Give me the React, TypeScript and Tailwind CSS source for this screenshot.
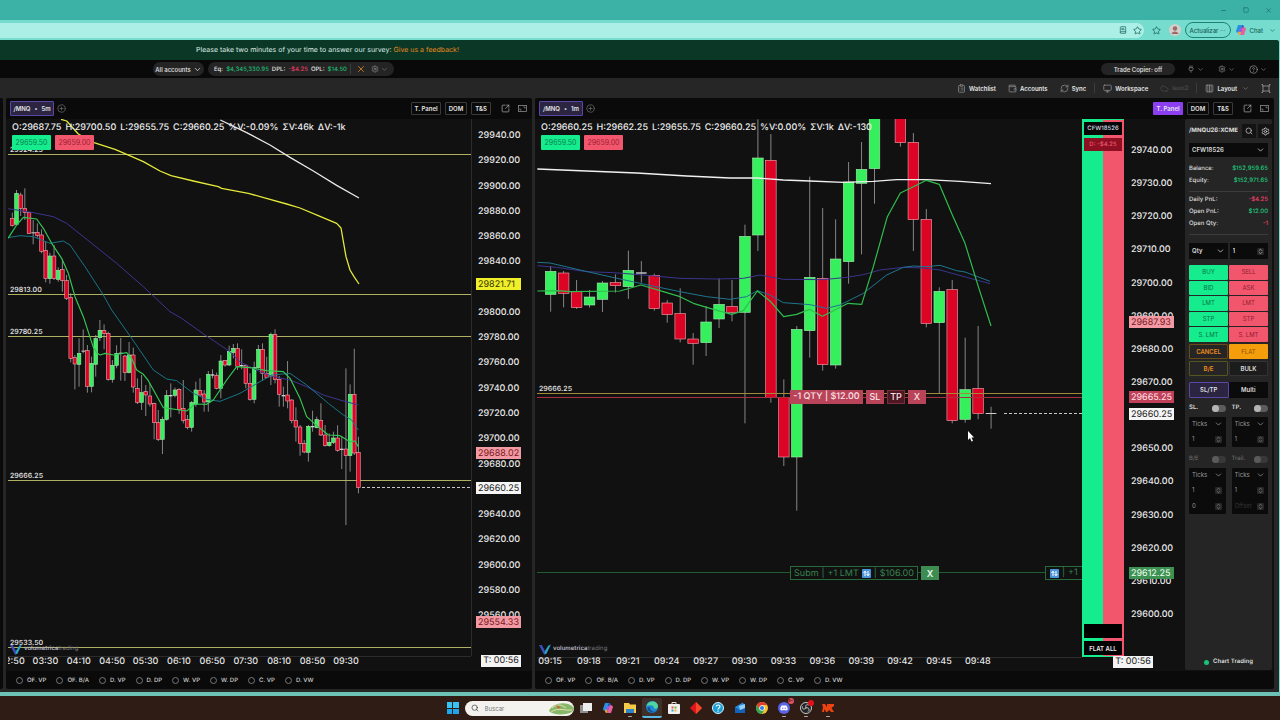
import { useState } from "react";
import type { ReactNode } from "react";
import {
  BookText, ChevronDown, ChevronsUpDown, CircleHelp, CirclePlus, ClipboardList, Columns4,
  Minus, Monitor, Plug, RefreshCw, Search, Settings, Square, SquareArrowOutUpRight,
  Star, Cloud, Wallet, X,
} from "lucide-react";
import { FaDiscord } from "react-icons/fa";

// x index, high, low, body top, body bottom, direction (1 up, -1 down, 0 flat)
type Candle = [number, number, number, number, number, number];

// candle and average coordinates are stored on a grid of 3 units per pixel
const UNIT = 3;

const candles5m: Candle[] = [
  [0, 308, 350, 325, 346, -1], [1, 240, 346, 250, 343, 1], [2, 248, 318, 255, 295, -1], [3, 235, 330, 295, 308, -1],
  [4, 305, 372, 308, 370, -1], [5, 330, 403, 367, 370, 0], [6, 340, 383, 367, 376, -1], [7, 358, 430, 375, 424, -1],
  [8, 395, 517, 421, 506, -1], [9, 428, 521, 438, 506, 1], [10, 405, 510, 438, 506, -1], [11, 472, 515, 481, 508, 1],
  [12, 448, 545, 478, 512, -1], [13, 495, 570, 512, 565, -1], [14, 550, 757, 562, 745, -1], [15, 735, 838, 743, 762, -1],
  [16, 685, 830, 730, 763, 1], [17, 658, 730, 722, 725, 0], [18, 705, 848, 722, 829, -1], [19, 740, 847, 760, 829, 1],
  [20, 675, 800, 686, 763, 1], [21, 630, 693, 661, 683, 1], [22, 643, 718, 661, 671, -1], [23, 665, 812, 670, 808, -1],
  [24, 750, 818, 766, 808, 1], [25, 706, 775, 730, 766, 1], [26, 684, 812, 728, 732, 0], [27, 735, 813, 738, 788, -1],
  [28, 696, 790, 735, 788, 1], [29, 713, 848, 735, 831, -1], [30, 805, 882, 835, 877, -1], [31, 795, 900, 848, 877, 1],
  [32, 825, 918, 845, 855, -1], [33, 820, 890, 858, 882, -1], [34, 878, 988, 881, 938, -1], [35, 900, 993, 938, 988, -1],
  [36, 920, 1032, 928, 988, 1], [37, 840, 932, 856, 928, 1], [38, 820, 922, 855, 859, 0], [39, 833, 862, 840, 856, 1],
  [40, 835, 912, 838, 898, -1], [41, 810, 940, 895, 931, -1], [42, 915, 958, 928, 952, -1], [43, 873, 965, 878, 952, 1],
  [44, 815, 890, 840, 882, 1], [45, 805, 858, 841, 855, -1], [46, 840, 905, 852, 876, -1], [47, 783, 905, 793, 876, 1],
  [48, 778, 805, 793, 797, 0], [49, 788, 838, 796, 835, -1], [50, 735, 865, 753, 835, 1], [51, 750, 770, 752, 765, -1],
  [52, 707, 768, 724, 765, 1], [53, 702, 745, 715, 728, 1], [54, 700, 780, 716, 770, -1], [55, 718, 778, 765, 769, 0],
  [56, 762, 835, 767, 820, -1], [57, 790, 872, 820, 868, -1], [58, 755, 880, 773, 868, 1], [59, 705, 776, 718, 773, 1],
  [60, 700, 812, 718, 790, -1], [61, 740, 805, 790, 803, -1], [62, 668, 825, 673, 798, 1], [63, 658, 820, 673, 808, -1],
  [64, 798, 890, 808, 853, -1], [65, 830, 890, 855, 859, 0], [66, 753, 895, 855, 873, -1], [67, 868, 940, 870, 932, -1],
  [68, 892, 995, 932, 951, -1], [69, 945, 1037, 951, 1000, -1], [70, 990, 1030, 1000, 1026, -1], [71, 945, 1055, 949, 1027, 1],
  [72, 902, 965, 948, 952, 0], [73, 920, 955, 929, 953, 1], [74, 880, 978, 931, 975, -1], [75, 945, 1010, 975, 1007, -1],
  [76, 970, 1010, 997, 1007, 1], [77, 965, 1002, 984, 997, 1], [78, 946, 1025, 984, 1021, -1], [79, 978, 1077, 1016, 1020, 0],
  [80, 775, 1245, 1017, 1037, -1], [81, 823, 1085, 853, 1037, 1], [82, 716, 1035, 853, 1029, -1], [83, 980, 1150, 1027, 1133, -1],
];

const candles1m: Candle[] = [
  [0, 498, 635, 514, 583, 1], [1, 513, 622, 519, 580, -1], [2, 540, 627, 574, 623, -1], [3, 570, 623, 591, 615, 1],
  [4, 543, 636, 549, 598, 1], [5, 523, 578, 548, 557, -1], [6, 452, 597, 511, 560, 1], [7, 483, 548, 517, 521, 0],
  [8, 521, 632, 526, 626, -1], [9, 600, 668, 609, 644, -1], [10, 565, 727, 641, 717, -1], [11, 699, 794, 717, 730, -1],
  [12, 618, 768, 666, 728, 1], [13, 535, 684, 613, 657, 1], [14, 540, 664, 619, 637, -1], [15, 374, 970, 409, 637, 1],
  [16, 58, 453, 174, 405, 1], [17, 102, 908, 181, 892, -1], [18, 838, 1098, 893, 1071, -1], [19, 678, 1232, 688, 1071, 1],
  [20, 230, 773, 532, 692, 1], [21, 324, 812, 535, 794, -1], [22, 358, 806, 477, 795, 1], [23, 186, 551, 246, 485, 1],
  [24, 126, 463, 208, 250, 1], [25, 40, 311, 40, 206, 1], [27, 40, 140, 40, 128, -1], [28, 99, 453, 127, 359, -1],
  [29, 327, 682, 358, 671, -1], [30, 562, 880, 574, 668, 1], [31, 540, 970, 569, 962, -1], [32, 713, 968, 869, 958, 1],
  [33, 678, 958, 865, 941, -1], [34, 920, 986, 939, 942, 0],
];

const averages5m = [
  { color: "#e4e93a", width: 1.3, points: "183,28 200,33 235,72 282,98 345,118 380,133 430,155 480,183 513,197 580,213 655,230 665,235 745,250 810,268 860,282 900,294 960,319 1010,340 1023,354 1038,440 1050,480 1062,500 1077,522" },
  { color: "#e8e8e8", width: 1.3, points: "661,30 740,68 810,105 870,142 940,183 1010,226 1077,264" },
  { color: "#3c3590", width: 1, points: "24,296 100,308 160,320 200,340 275,400 350,460 430,530 510,605 545,625 615,675 690,725 720,756 780,785 820,800 870,810 920,830 970,855 1020,870 1075,885" },
  { color: "#1b7486", width: 1, points: "24,383 60,377 100,380 150,400 190,393 210,405 255,470 310,555 335,600 395,685 460,780 500,807 530,812 580,850 620,868 660,874 720,850 780,815 815,795 870,790 920,825 985,880 1030,915 1055,930 1075,960" },
  { color: "#35c552", width: 1.2, points: "24,385 50,345 70,322 110,327 130,355 155,400 185,445 205,490 225,560 250,620 280,712 290,728 300,735 315,730 340,735 380,728 395,745 410,780 430,793 445,812 490,893 560,903 585,882 620,883 640,870 680,810 710,770 750,773 800,782 850,785 870,805 900,865 920,920 960,955 985,975 1020,977 1050,995 1065,993 1075,1010" },
];

const averages1m = [
  { color: "#f0f0f0", width: 1.3, points: "22,207 170,213 320,219 470,228 600,234 682,234 760,240 840,243 940,247 1030,244 1100,239 1190,239 1290,244 1383,251" },
  { color: "#3a348c", width: 1, points: "22,497 80,502 170,515 250,518 340,525 450,535 560,537 640,535 690,525 760,538 880,539 950,532 1000,524 1050,510 1120,502 1180,504 1230,510 1310,532 1380,551" },
  { color: "#1f7490", width: 1, points: "22,487 60,489 150,510 230,528 330,550 450,575 530,590 600,598 650,590 682,572 720,585 760,608 840,614 890,625 930,615 1000,580 1070,525 1120,502 1150,498 1190,500 1230,496 1280,512 1305,516 1380,544" },
  { color: "#2fbe4c", width: 1.2, points: "22,573 80,572 120,575 270,573 333,555 400,575 450,590 490,610 540,625 605,643 640,632 682,573 720,603 761,650 800,643 838,628 877,649 915,630 954,610 995,613 1030,500 1072,350 1111,279 1150,260 1189,241 1228,253 1267,345 1305,430 1345,560 1383,678" },
];

const levels5m = [
  { y: 35, label: "29924.25" },
  { y: 175, label: "29813.00" },
  { y: 217, label: "29780.25" },
  { y: 361, label: "29666.25" },
  { y: 528, label: "29533.50" },
];

const times5m = ["02:50", "03:30", "04:10", "04:50", "05:30", "06:10", "06:50", "07:30", "08:10", "08:50", "09:30"];
const times1m = ["09:15", "09:18", "09:21", "09:24", "09:27", "09:30", "09:33", "09:36", "09:39", "09:42", "09:45", "09:48"];
const indicators = ["OF. VP", "OF. B/A", "D. VP", "D. DP", "W. VP", "W. DP", "C. VP", "D. VW"];

function Candles({ data, first, step, width }: { data: Candle[]; first: number; step: number; width: number }) {
  return (
    <g>
      {data.map(([i, high, low, top, bottom, dir]) => {
        const x = (first + i * step) / UNIT;
        const fill = dir > 0 ? "#35f05c" : dir < 0 ? "#dc0424" : "#cfcfcf";
        return (
          <g key={i}>
            <line x1={x} x2={x} y1={high / UNIT} y2={low / UNIT} stroke="#a3a3a3" strokeWidth={0.8} />
            <rect
              x={x - width / 2}
              y={top / UNIT}
              width={width}
              height={Math.max((bottom - top) / UNIT, 1)}
              fill={fill}
              stroke={dir > 0 ? "#a9e8b2" : dir < 0 ? "#f0a9b1" : "none"}
              strokeWidth={0.6}
            />
          </g>
        );
      })}
    </g>
  );
}

function Averages({ lines }: { lines: typeof averages5m }) {
  return (
    <g transform={`scale(${1 / UNIT})`} fill="none" strokeLinejoin="round">
      {lines.map((l) => (
        <polyline key={l.color} points={l.points} stroke={l.color} strokeWidth={l.width * UNIT} />
      ))}
    </g>
  );
}

function TimeLabels({ times, first, step }: { times: string[]; first: number; step: number }) {
  return (
    <g className="fill-[#e4e4e4] text-[9px] font-medium" textAnchor="middle">
      {times.map((t, i) => (
        <text key={t} x={first + i * step} y={545}>{t}</text>
      ))}
    </g>
  );
}

type Mark = { y: number; text: string; box: string; ink: string };

function PriceAxis({ top, step, from, by, count, marks }: { top: number; step: number; from: number; by: number; count: number; marks: Mark[] }) {
  return (
    <svg className="h-[552px] w-full text-[9px]">
      <g className="fill-[#e9e9e9] font-medium">
        {Array.from({ length: count }, (_, i) => (
          <text key={i} x={7} y={top + i * step + 4}>{(from - i * by).toFixed(2)}</text>
        ))}
      </g>
      {marks.map((m) => (
        <g key={m.text}>
          <rect x={5} y={m.y - 6} width={45} height={12} fill={m.box} />
          <text x={7} y={m.y + 3} fill={m.ink}>{m.text}</text>
        </g>
      ))}
    </svg>
  );
}

function Brand() {
  return (
    <div className="absolute top-[524px] left-0.5 flex items-center gap-0.5 text-[6px] leading-3 text-[#b9b9c6]">
      <svg width="12" height="11" viewBox="0 0 13 12">
        <path d="M0 1 3 1 6.500 7.500 6.500 11.500 5 11Z" fill="#3b4fb8" />
        <path d="M13 0.500 10 2 6.500 7.500 6 11.500 8 10.500Z" fill="#2aa3c4" />
      </svg>
      <span><b className="font-semibold">volumetrica</b><span className="text-[#77777f]">trading</span></span>
    </div>
  );
}

function Quotes({ text }: { text: string[] }) {
  return (
    <div className="absolute top-[3px] left-1">
      <div className="flex gap-1 text-[9px] leading-3 font-medium whitespace-nowrap text-[#ededed]">
        {text.map((t) => <span key={t}>{t}</span>)}
      </div>
      <div className="mt-px flex gap-1 text-[7px] leading-[15px]">
        <button className="w-[39px] rounded-[1px] bg-[#14ec8d] text-[#0b8050]">29659.50</button>
        <button className="w-[39px] rounded-[1px] bg-[#f2566c] text-[#9c1f33]">29659.00</button>
      </div>
    </div>
  );
}

function SwapIcon() {
  return (
    <svg width="9" height="9" viewBox="0 0 9 9">
      <rect width="9" height="9" rx="1" fill="#4b94dc" />
      <path d="M3 7V2.500M1.500 4 3 2.200 4.300 4M6 2V6.500M4.700 5 6 6.800 7.500 5" stroke="#fff" fill="none" />
    </svg>
  );
}

function PanelHeader({ symbol, active }: { symbol: string; active?: boolean }) {
  return (
    <div className="flex h-[21px] items-center pr-[5px] pl-1 text-[6px] font-semibold text-[#e5e5e5]">
      <button className="flex h-[15px] w-[44px] items-center justify-center gap-1 rounded-[1px] border border-[#5b46a8] bg-[#2b2542]">
        <span>/MNQ</span><span>•</span><span>{symbol}</span>
      </button>
      <button aria-label="Add symbol" className="ml-[3px] text-[#6a6a6a]"><CirclePlus size={9} /></button>
      <div className="ml-auto flex h-[13px] items-center gap-1">
        <button className={active ? "h-[13px] w-[30px] rounded-[1px] bg-[#8b3ff0]" : "h-[13px] w-[30px] rounded-[1px] border border-[#3a3a3a]"}>T. Panel</button>
        <button className="h-[13px] w-[22px] rounded-[1px] border border-[#3a3a3a]">DOM</button>
        <button className="h-[13px] w-5 rounded-[1px] border border-[#3a3a3a]">T&amp;S</button>
        <button aria-label="Detach" className="ml-1.5 text-[#a3a3a3]"><SquareArrowOutUpRight size={9} /></button>
        <button aria-label="Maximize" className="ml-1 text-[#8a8a8a]">
          <svg width="9" height="7" viewBox="0 0 9 7" fill="none" stroke="currentColor" strokeWidth="0.800">
            <rect x="0.500" y="0.500" width="8" height="6" />
            <path d="M5.500 2H7V3.500M2 3.500V5H3.500" />
          </svg>
        </button>
      </div>
    </div>
  );
}

function PanelFooter() {
  return (
    <div className="flex h-[18px] items-center gap-2.5 pl-2.5 text-[6px] font-medium text-[#d0d0d0]">
      {indicators.map((name) => (
        <label key={name} className="flex items-center gap-1">
          <input type="checkbox" className="size-[7px] appearance-none rounded-full border border-[#777] checked:bg-[#8b3ff0]" />
          {name}
        </label>
      ))}
    </div>
  );
}

function Field({ label, options, className }: { label: string; options: string[]; className: string }) {
  return (
    <div className={`relative ${className}`}>
      <select aria-label={label} className="h-full w-full appearance-none bg-transparent pl-[3px]">
        {options.map((o) => <option key={o}>{o}</option>)}
      </select>
      <ChevronDown size={9} className="pointer-events-none absolute top-1/2 right-[3px] -translate-y-1/2" />
    </div>
  );
}

function Stepper({ label, value, placeholder }: { label: string; value?: string; placeholder?: string }) {
  return (
    <div className="flex h-4 items-center pr-1">
      <input aria-label={label} defaultValue={value} placeholder={placeholder} className="w-0 flex-1 bg-transparent pl-[3px] placeholder:text-[#343434]" />
      <ChevronsUpDown size={7} className="rounded-[1px] bg-[#262626]" />
    </div>
  );
}

function Bracket({ name, rows, dim }: { name: string; rows: { value?: string; placeholder?: string }[]; dim?: boolean }) {
  return (
    <div className="flex flex-1 flex-col gap-[3px]">
      <label className={dim ? "flex h-3 items-center justify-between text-[#6f6f6f]" : "flex h-3 items-center justify-between font-semibold text-[#dedede]"}>
        {name}
        <span className={dim ? "flex h-[7px] w-3.5 rounded-full bg-[#383838]" : "flex h-[7px] w-3.5 rounded-full bg-[#5c5c5c]"}>
          <input type="checkbox" className={dim ? "size-[7px] appearance-none rounded-full bg-[#5a5a5a] checked:ml-auto" : "size-[7px] appearance-none rounded-full bg-[#b5b5b5] checked:ml-auto"} />
        </span>
      </label>
      <div className="rounded-[1px] bg-[#0b0b0b] text-[#999]">
        <Field label={`${name} unit`} options={["Ticks", "Price"]} className="h-3.5" />
        {rows.map((r, i) => <Stepper key={i} label={`${name} value ${i + 1}`} {...r} />)}
      </div>
    </div>
  );
}

function Row({ name, value, tone }: { name: string; value: string; tone: string }) {
  return (
    <div className="flex h-3 items-center justify-between">
      <span>{name}</span><span className={tone}>{value}</span>
    </div>
  );
}

function OrderPad() {
  const [mode, setMode] = useState("SL/TP");
  return (
    <aside className="mr-0.5 flex h-[551px] w-[87px] shrink-0 flex-col rounded-[2px] bg-[#252525] px-1 pt-1 text-[6px] leading-[8px] text-[#dedede]">
      <div className="-mr-1 flex h-4 items-center gap-0.5">
        <h2 className="w-0 flex-1 font-bold whitespace-nowrap">/MNQU26:XCME</h2>
        <button aria-label="Search symbol" className="grid size-3.5 place-items-center bg-[#131313]"><Search size={8} /></button>
        <button aria-label="Settings" className="grid size-3.5 place-items-center bg-[#131313]"><Settings size={9} /></button>
      </div>
      <Field label="Account" options={["CFW18526"]} className="mt-1 h-3.5 bg-[#0b0b0b] font-semibold" />
      <div className="mt-1.5 border-b border-[#3c3c3c] pb-1 font-medium">
        <Row name="Balance:" value="$152,959.65" tone="text-[#1ec97d]" />
        <Row name="Equity:" value="$152,971.65" tone="text-[#1ec97d]" />
      </div>
      <div className="mt-0.5 border-b border-[#3c3c3c] pb-1 font-medium">
        <Row name="Daily PnL:" value="-$4.25" tone="text-[#f0426a]" />
        <Row name="Open PnL:" value="$12.00" tone="text-[#1ec97d]" />
        <Row name="Open Qty:" value="-1" tone="text-[#f0426a]" />
      </div>
      <div className="mt-2 grid grid-cols-2 gap-0.5 font-semibold">
        <Field label="Quantity mode" options={["Qty"]} className="h-4 bg-[#0b0b0b]" />
        <div className="h-4 bg-[#0b0b0b]"><Stepper label="Quantity" value="1" /></div>
      </div>
      <div className="mt-1.5 grid h-[77px] grid-cols-2 grid-rows-5 gap-px">
        {["BUY", "SELL", "BID", "ASK", "LMT", "LMT", "STP", "STP", "S. LMT", "S. LMT"].map((t, i) => (
          <button key={i} className={i % 2 ? "rounded-[1px] bg-[#f2566c] text-[#8e1e30]" : "rounded-[1px] bg-[#14ec8d] text-[#0a7047]"}>{t}</button>
        ))}
      </div>
      <div className="mt-0.5 grid grid-cols-2 gap-x-px gap-y-0.5 font-semibold">
        <button className="h-[15px] rounded-[1px] border border-[#6b4a14] text-[#f08c1c]">CANCEL</button>
        <button className="h-[15px] rounded-[1px] bg-[#f59e0b] font-normal text-[#8a5200]">FLAT</button>
        <button className="h-[15px] rounded-[1px] border border-[#55551e] text-[#f08c1c]">B/E</button>
        <button className="h-[15px] rounded-[1px] border border-[#333] bg-[#1c1c1c]">BULK</button>
      </div>
      <div className="mt-1.5 grid grid-cols-2 bg-[#0b0b0b] font-semibold">
        {["SL/TP", "Multi"].map((m) => (
          <button key={m} onClick={() => setMode(m)} className={mode === m ? "h-4 rounded-[1px] border border-[#5b46a8] bg-[#2b2542]" : "h-4"}>{m}</button>
        ))}
      </div>
      <div className="mt-1 flex gap-1.5">
        <Bracket name="SL." rows={[{ value: "1" }]} />
        <Bracket name="TP." rows={[{ value: "1" }]} />
      </div>
      <div className="mt-1.5 flex gap-1.5">
        <Bracket name="B/E" dim rows={[{ value: "1" }, { value: "0" }]} />
        <Bracket name="Trail." dim rows={[{ value: "1" }, { placeholder: "Offset" }]} />
      </div>
      <div className="mt-auto flex h-4 items-center justify-center gap-1 font-semibold">
        <span className="size-[5px] rounded-full bg-[#17c47a]" />Chart Trading
      </div>
    </aside>
  );
}

function Chart5m() {
  return (
    <section className="min-w-0 rounded-[2px] bg-[#0a0a0a]">
      <PanelHeader symbol="5m" />
      <div className="flex bg-[#111] pl-0.5">
        <div className="relative w-0 flex-1">
          <svg className="h-[552px] w-full">
            <path d="M0 537.500H463" stroke="#2c2c2c" />
            <g className="fill-[#dcdcdc] text-[7px] font-semibold">
              {levels5m.map((l) => (
                <g key={l.label}>
                  <rect x={0} y={l.y} width="100%" height={1} fill="#b0b062" />
                  <text x={2} y={l.y - 2}>{l.label}</text>
                </g>
              ))}
            </g>
            <g transform="translate(-8 -9)">
              <Candles data={candles5m} first={37} step={12.51} width={3.6} />
              <Averages lines={averages5m} />
            </g>
            <path d="M354 368.500H463" stroke="#c8c8c8" strokeDasharray="3 2" />
            <TimeLabels times={times5m} first={4} step={33.4} />
          </svg>
          <Quotes text={["O:29687.75", "H:29700.50", "L:29655.75", "C:29660.25", "%V:-0.09%", "ΣV:46k", "ΔV:-1k"]} />
          <Brand />
        </div>
        <div className="relative w-[61px] shrink-0">
          <div className="absolute top-0 left-0 h-[537px] w-px bg-[#2c2c2c]" />
          <PriceAxis top={15} step={25.27} from={29940} by={20} count={20} marks={[
            { y: 165, text: "29821.71", box: "#f0f02a", ink: "#333300" },
            { y: 334, text: "29688.02", box: "#f29aa3", ink: "#7c1722" },
            { y: 369, text: "29660.25", box: "#f5f5f5", ink: "#222" },
            { y: 503, text: "29554.33", box: "#f29aa3", ink: "#7c1722" },
          ]} />
          <div className="absolute top-[536px] left-[10px] w-10 bg-[#f3f3f3] text-center text-[9px] leading-3 text-[#222]">T: 00:56</div>
        </div>
      </div>
      <PanelFooter />
    </section>
  );
}

function Chart1m() {
  return (
    <section className="min-w-0 rounded-[2px] bg-[#0a0a0a]">
      <PanelHeader symbol="1m" active />
      <div className="flex bg-[#111] pl-0.5">
        <div className="relative w-0 flex-1 overflow-hidden">
          <svg className="h-[552px] w-full">
            <rect y={538} width="100%" height={1} fill="#2c2c2c" />
            <g transform="translate(-7 -19)">
              <Candles data={candles1m} first={62} step={38.86} width={10.6} />
              <Averages lines={averages1m} />
            </g>
            <rect y={274} width="100%" height={1} fill="#a3893a" />
            <rect y={278} width="100%" height={1} fill="#a83040" />
            <rect y={453} width="100%" height={1} fill="#1f5c34" />
            <path d="M467 294.500H545" stroke="#c8c8c8" strokeDasharray="3 2" />
            <text x={2} y={272} className="fill-[#dcdcdc] text-[7px] font-semibold">29666.25</text>
            <TimeLabels times={times1m} first={13} step={38.9} />
            <path d="M431 312V321L433 319 434.500 322.500 436 322 434.500 318.500H437Z" fill="#fff" />
          </svg>
          <Quotes text={["O:29660.25", "H:29662.25", "L:29655.75", "C:29660.25", "%V:0.00%", "ΣV:1k", "ΔV:-130"]} />
          <div className="absolute top-[271px] left-[253px] flex gap-[3px] text-[9px] leading-[14px] font-medium whitespace-nowrap text-[#fbe3e6]">
            <span className="w-[73px] bg-[#b9445a] text-center">-1 QTY | $12.00</span>
            <button className="w-[18px] bg-[#b9445a]">SL</button>
            <button className="w-[18px] bg-[#4e1822] outline -outline-offset-1 outline-[#7c2c3a]">TP</button>
            <button className="w-[18px] bg-[#b9445a]">X</button>
          </div>
          <div className="absolute top-[447px] left-[253px] flex gap-[3px] text-[9px] leading-[13px] whitespace-nowrap text-[#37834f]">
            <span className="flex h-[14px] w-[128px] items-center justify-center gap-[3px] border border-[#276b3d] bg-[#111]">
              <span>Subm</span><span>|</span><span>+1 LMT</span><SwapIcon /><span>|</span><span>$106.00</span>
            </span>
            <button className="h-[14px] w-[18px] bg-[#3d8d52] font-semibold text-[#eafbee]">X</button>
          </div>
          <div className="absolute top-[447px] left-[508px] flex h-[14px] w-[60px] items-center gap-[3px] border border-[#276b3d] bg-[#111] pl-1 text-[9px] text-[#37834f]">
            <SwapIcon /><span>|</span><span>+1</span>
          </div>
          <Brand />
        </div>
        <div className="flex h-[538px] w-[42px] shrink-0 flex-col gap-[3px] border border-[#14ec8d] border-r-[#f2566c] bg-linear-to-r from-[#14ec8d] from-50% to-[#f2566c] to-50% px-px py-0.5 text-center text-[6px] leading-[13px] font-medium">
          <div className="bg-[#050505] text-[#d8dde6]">CFW18526</div>
          <div className="bg-[#8c0f22] text-[#ee5a70]">D: -$4.25</div>
          <div className="mt-auto h-[14px] bg-black" />
          <button className="-mb-px h-[14px] bg-black font-semibold text-[#eee]">FLAT ALL</button>
        </div>
        <div className="relative w-[61px] shrink-0">
          <PriceAxis top={30} step={33.14} from={29740} by={10} count={15} marks={[
            { y: 203, text: "29687.93", box: "#f29aa3", ink: "#7c1722" },
            { y: 278, text: "29665.25", box: "#c0405a", ink: "#ffe3e7" },
            { y: 295, text: "29660.25", box: "#f5f5f5", ink: "#222" },
            { y: 454, text: "29612.25", box: "#3d9152", ink: "#f0fff3" },
          ]} />
          <div className="absolute top-[537px] -left-[11px] w-10 bg-[#f3f3f3] text-center text-[9px] leading-3 text-[#222]">T: 00:56</div>
        </div>
        <OrderPad />
      </div>
      <PanelFooter />
    </section>
  );
}

function Browser() {
  return (
    <header className="text-[#155e57]">
      <div className="flex h-5 items-center justify-end gap-4 bg-[#3cb2a6] pr-2">
        <button aria-label="Minimize"><Minus size={7} /></button>
        <button aria-label="Restore"><Square size={6} /></button>
        <button aria-label="Close"><X size={7} /></button>
      </div>
      <div className="flex h-5 items-center bg-[#76dccd] pr-1 text-[6px] font-medium">
        <div className="flex h-[15px] flex-1 items-center gap-1.5 rounded-r-full bg-[#abefe6] pr-0.5">
          <input aria-label="Address" className="h-full min-w-0 flex-1 bg-transparent" />
          <BookText size={8} /><Star size={9} />
        </div>
        <button aria-label="Favorites" className="ml-2"><Star size={9} /></button>
        <svg className="ml-2" width="12" height="12" viewBox="0 0 12 12">
          <circle cx="6" cy="6" r="6" fill="#d3cfcb" />
          <circle cx="6" cy="4.500" r="2.200" fill="#9b6a68" />
          <path d="M2.500 10C3 6.500 9 6.500 9.500 10Z" fill="#9b6a68" />
        </svg>
        <button className="ml-1 h-4 w-[46px] rounded-full border border-[#1b8277]">Actualizar ···</button>
        <button className="ml-1 flex items-center gap-[3px]"><CopilotIcon size={12} />Chat</button>
        <ChevronDown size={7} className="ml-1.5" />
      </div>
    </header>
  );
}

function CopilotIcon({ size }: { size: number }) {
  return (
    <svg width={size} height={size} viewBox="0 0 12 12">
      <path d="M3 1H7L5 8C4.500 9.500 1 9 1 7Z" fill="#2a8fe0" />
      <path d="M7 1C9 1 9 3 9 4L6 5Z" fill="#2457c5" />
      <path d="M9 11H5L7 4C7.500 2.500 11 3 11 5Z" fill="#e8609b" />
      <path d="M5 11C3 11 3 9.500 3 8L6 7Z" fill="#f2a13c" />
      <path d="M5 4 7.500 4 6.500 8 4.500 8Z" fill="#9a5be0" />
    </svg>
  );
}

function Tool({ icon, children }: { icon: ReactNode; children: ReactNode }) {
  return <button className="flex items-center gap-[3px]"><span className="text-[#8d8d8d]">{icon}</span>{children}</button>;
}

function TopBars() {
  return (
    <>
      <div className="flex h-5 items-center gap-0.5 bg-[#0b3826] pl-49 text-[7px] text-[#dfe9e4]">
        Please take two minutes of your time to answer our survey: <a href="#survey" className="text-[#e8871a]">Give us a feedback!</a>
      </div>
      <div className="flex h-[18px] items-center gap-1 bg-[#090909] pr-3 pl-[153px] text-[6px] font-medium text-[#e5e5e5]">
        <button className="flex h-[14px] w-[51px] items-center justify-center gap-0.5 rounded-full bg-[#242424]">All accounts <ChevronDown size={9} /></button>
        <div className="flex h-[14px] items-center gap-[3px] rounded-full bg-[#242424] px-1.5">
          <span>Eq:</span><span className="text-[#1dbb70]">$4,345,330.95</span>
          <span>DPL:</span><span className="text-[#e83a62]">-$4.25</span>
          <span>OPL:</span><span className="text-[#1dbb70]">$14.50</span>
          <span className="h-2.5 w-px bg-[#3c3c3c]" />
          <button aria-label="Flatten all" className="ml-0.5 text-[#d98324]"><X size={10} /></button>
          <button aria-label="Account settings" className="ml-0.5 flex items-center gap-0.5 text-[#8d8d8d]"><Settings size={8} /><ChevronDown size={7} /></button>
        </div>
        <button className="ml-auto h-3 w-[74px] rounded-full bg-[#242424]">Trade Copier: off</button>
        <div className="ml-2 flex gap-3.5 text-[#8d8d8d]">
          <button aria-label="Connection" className="flex items-center gap-0.5"><Plug size={8} /><ChevronDown size={7} /></button>
          <button aria-label="Settings" className="flex items-center gap-0.5"><Settings size={8} /><ChevronDown size={7} /></button>
          <button aria-label="Help" className="flex items-center gap-0.5"><CircleHelp size={9} /><ChevronDown size={7} /></button>
        </div>
      </div>
      <nav className="flex h-5 items-center justify-end gap-3 pr-2 text-[6px] font-semibold text-[#e5e5e5]">
        <Tool icon={<ClipboardList size={9} />}>Watchlist</Tool>
        <Tool icon={<Wallet size={9} />}>Accounts</Tool>
        <Tool icon={<RefreshCw size={9} />}>Sync</Tool>
        <span className="-mx-1 h-2.5 w-px bg-[#3c3c3c]" />
        <Tool icon={<Monitor size={9} />}>Workspace</Tool>
        <span className="flex items-center gap-[3px] text-[#4a4a4a]"><Cloud size={9} />leon2</span>
        <span className="-mx-1 h-2.5 w-px bg-[#3c3c3c]" />
        <Tool icon={<Columns4 size={9} />}>Layout<ChevronDown size={7} className="ml-0.5 text-[#8d8d8d]" /></Tool>
        <button aria-label="Fullscreen" className="text-[#8d8d8d]">
          <svg width="10" height="9" viewBox="0 0 10 9" fill="none" stroke="currentColor" strokeWidth="0.900">
            <path d="M2 1V8M8 1V8M1 2H9M1 7H9M0.500 0.500H2M8 0.500H9.500M0.500 8.500H2M8 8.500H9.500" />
          </svg>
        </button>
      </nav>
    </>
  );
}

// taskbar slot with the small mark shown under open programs
function Running({ children }: { children: ReactNode }) {
  return (
    <span className="relative size-3">
      {children}
      <span className="absolute -bottom-[3px] left-1 h-px w-1 rounded-full bg-[#b5aaa5]" />
    </span>
  );
}

function Taskbar() {
  return (
    <footer className="flex h-6 items-center justify-center gap-2.5 bg-[#2f1c15]">
      <button aria-label="Start" className="grid size-3 grid-cols-2 gap-px">
        <span className="bg-[#35c3f3]" /><span className="bg-[#35c3f3]" /><span className="bg-[#1fa5ea]" /><span className="bg-[#1fa5ea]" />
      </button>
      <label className="-mx-1 flex h-[15px] w-[109px] items-center gap-1.5 overflow-hidden rounded-full bg-[#f4f2ee] pl-1.5">
        <Search size={8} className="shrink-0 text-[#333]" />
        <input aria-label="Search" placeholder="Buscar" className="w-0 flex-1 text-[6px] placeholder:text-[#777]" />
        <svg width="25" height="13" viewBox="0 0 25 13">
          <path d="M0 9C3 1 18 -2 25 6C25 14 4 14 0 9Z" fill="#86b86a" />
          <path d="M3 6C9 1 13 3 17 6M2 10C9 5 17 9 23 8" stroke="#e4ddb0" fill="none" />
          <path d="M7 3 12 5 9 7Z" fill="#c96c3c" />
        </svg>
      </label>
      <svg width="12" height="12" viewBox="0 0 12 12"><rect y="3" width="8" height="8" fill="#8c8c8c" /><rect x="3" y="1" width="9" height="8" fill="#ededed" /></svg>
      <CopilotIcon size={12} />
      <Running>
        <svg width="12" height="12" viewBox="0 0 12 12"><path d="M0 1H5L6 2.500H12V11H0Z" fill="#f7c948" /><path d="M2 7H10V11H2Z" fill="#2d84c9" /></svg>
      </Running>
      <span className="-mx-1 grid h-5 w-5 place-items-center rounded-[2px] border-b-2 border-[#59b7e0] bg-[#40302a]">
        <svg width="12" height="12" viewBox="0 0 12 12"><circle cx="6" cy="6" r="6" fill="#1f86d1" /><path d="M0.500 5C2 -1 12 -1 12 5.500C12 8 8 8 7.500 7C9 5 5 3 0.500 5Z" fill="#4fd6a0" /><path d="M4 6C3 9 7 12 10.500 10C8 13 1 11 1.500 6.500Z" fill="#124f94" /></svg>
      </span>
      <svg width="12" height="12" viewBox="0 0 12 12"><path d="M4 2V0.500H8V2" stroke="#ddd" fill="none" /><rect y="2" width="12" height="10" rx="1" fill="#f1f1f1" /><path d="M3.500 4.500H5.500V6.500H3.500Z" fill="#e8513a" /><path d="M6.500 4.500H8.500V6.500H6.500Z" fill="#6fb53f" /><path d="M3.500 7.500H5.500V9.500H3.500Z" fill="#3c9be0" /><path d="M6.500 7.500H8.500V9.500H6.500Z" fill="#f2b62b" /></svg>
      <svg width="12" height="12" viewBox="0 0 12 12"><path d="M6 0 12 6 6 12 0 6Z" fill="#e0161c" /><path d="M6 0V12L12 6Z" fill="#f2492b" /></svg>
      <svg width="12" height="12" viewBox="0 0 12 12"><circle cx="6" cy="6" r="5.500" fill="#1c9fd4" stroke="#d8f1fa" /><path d="M4.200 4.500C4.200 2.500 8 2.500 8 4.500C8 6 6 5.800 6 7.500M6 8.500V9.800" stroke="#fff" strokeWidth="1.200" fill="none" /></svg>
      <svg width="12" height="12" viewBox="0 0 12 12"><path d="M1 5 9 0.500 11 5V11H1Z" fill="#2b8be3" /><path d="M1 5 6 8 11 5V11H1Z" fill="#1461ba" /><path d="M5 4 11 2V6L6 8Z" fill="#8fd0f8" /></svg>
      <svg width="12" height="12" viewBox="0 0 12 12"><circle cx="6" cy="6" r="6" fill="#f4c22c" /><path d="M0.800 3A6 6 0 0 1 11.200 3H6L3 7Z" fill="#e33b2e" /><path d="M0.800 3A6 6 0 0 0 6 12L8 8 3.500 7.500Z" fill="#35a353" /><circle cx="6" cy="6" r="2.700" fill="#fff" /><circle cx="6" cy="6" r="2.100" fill="#3a7de8" /></svg>
      <Running>
        <span className="grid size-3 place-items-center rounded-full bg-[#5764e8] text-white"><FaDiscord size={8} /></span>
        <span className="absolute -top-1 -right-1 size-[6px] rounded-full bg-[#e4525f] text-center text-[4px] leading-[6px]">9+</span>
      </Running>
      <Running>
        <svg width="12" height="12" viewBox="0 0 12 12" fill="none" stroke="#c9c9c9"><circle cx="6" cy="6" r="5.500" fill="#242424" /><path d="M6 6C5 3 7 2 9 3M6 6C9 5 10 8 8 9.500M6 6C4 8 2 7 2.500 4.500" /></svg>
        <span className="absolute -top-0.5 -right-0.5 size-[6px] rounded-full bg-[#e3101b]" />
      </Running>
      <Running>
        <svg width="12" height="12" viewBox="0 0 12 12"><path d="M0 2H3L5 5V2H12V4L9.500 6 12 10H9L7.500 8 5 10H4L2.500 7 2 10H0L1 5Z" fill="#ee4211" /></svg>
      </Running>
    </footer>
  );
}

export default function App() {
  return (
    <div className="flex min-h-screen flex-col bg-[#76dccd] font-[Inter,sans-serif] [text-rendering:geometricPrecision]">
      <Browser />
      <div className="mr-px flex flex-1 flex-col overflow-hidden rounded-tr-[3px] bg-[#262626]">
        <TopBars />
        <main className="grid flex-1 grid-cols-[3px_526fr_739fr] gap-[3px] pr-[5px] pb-[3px]">
          <div className="rounded-r-[2px] bg-[#0a0a0a]" />
          <Chart5m />
          <Chart1m />
        </main>
      </div>
      <div className="h-1 bg-[#6cc2b5]" />
      <Taskbar />
    </div>
  );
}
